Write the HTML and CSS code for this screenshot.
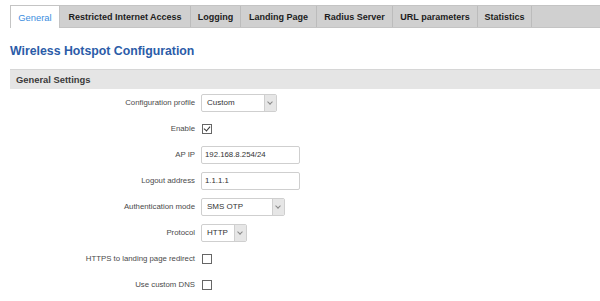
FILE: index.html
```html
<!DOCTYPE html>
<html lang="en">

<head>
  <meta charset="UTF-8">
  <meta name="viewport" content="width=device-width, initial-scale=1.0">
  <title>Wireless Hotspot</title>
  <link rel="stylesheet" href="styles.css">
</head>

<body>
  <div class="page">
    <ul class="tabs">
      <li class="tab active">General</li>
      <li class="tab">Restricted Internet Access</li>
      <li class="tab">Logging</li>
      <li class="tab">Landing Page</li>
      <li class="tab">Radius Server</li>
      <li class="tab">URL parameters</li>
      <li class="tab">Statistics</li>
    </ul>

    <h2 class="title">Wireless Hotspot Configuration</h2>

    <div class="section">
      <div class="section-head">General Settings</div>

      <div class="row">
        <label class="label">Configuration profile</label>
        <div class="field">
          <div class="select w76"><span class="select-text">Custom</span><span class="select-arrow"></span></div>
        </div>
      </div>

      <div class="row">
        <label class="label">Enable</label>
        <div class="field"><span class="check checked"></span></div>
      </div>

      <div class="row">
        <label class="label">AP IP</label>
        <div class="field"><div class="input">192.168.8.254/24</div></div>
      </div>

      <div class="row">
        <label class="label">Logout address</label>
        <div class="field"><div class="input">1.1.1.1</div></div>
      </div>

      <div class="row">
        <label class="label">Authentication mode</label>
        <div class="field">
          <div class="select w84"><span class="select-text">SMS OTP</span><span class="select-arrow"></span></div>
        </div>
      </div>

      <div class="row">
        <label class="label">Protocol</label>
        <div class="field">
          <div class="select w46"><span class="select-text">HTTP</span><span class="select-arrow"></span></div>
        </div>
      </div>

      <div class="row">
        <label class="label">HTTPS to landing page redirect</label>
        <div class="field"><span class="check"></span></div>
      </div>

      <div class="row">
        <label class="label">Use custom DNS</label>
        <div class="field"><span class="check"></span></div>
      </div>
    </div>
  </div>
</body>

</html>
```

FILE: styles.css
```css
body {
  margin: 0;
  padding: 0;
  background: #fff;
  font-family: 'Liberation Sans', Arial, sans-serif;
  color: #404040;
}

.page {
  padding: 5px 0 0 10px;
}

.tabs {
  display: flex;
  margin: 0;
  padding: 0;
  list-style: none;
  height: 21px;
  background: #d0d0d0;
  border-top: 1px solid #c4c4c4;
  border-bottom: 1px solid #c4c4c4;
}

.tab {
  display: flex;
  align-items: center;
  justify-content: center;
  white-space: nowrap;
  font-size: 9px;
  font-weight: bold;
  color: #1c1c1c;
  border-right: 1px solid #bcbcbc;
  box-sizing: border-box;
}

.tab:nth-child(1) { width: 50px; }
.tab:nth-child(2) { width: 131px; }
.tab:nth-child(3) { width: 50px; }
.tab:nth-child(4) { width: 76px; }
.tab:nth-child(5) { width: 76px; }
.tab:nth-child(6) { width: 85px; }
.tab:nth-child(7) { width: 54px; }

.tab.active {
  background: #fff;
  color: #3b8de0;
  font-weight: normal;
  font-size: 9.4px;
  border-left: 1px solid #c4c4c4;
  border-right: 1px solid #c4c4c4;
  margin-bottom: -1px;
  height: 22px;
}

.title {
  margin: 15px 0 0 0;
  height: 26px;
  font-size: 12.3px;
  line-height: 16px;
  font-weight: bold;
  color: #2b5ca8;
}

.section-head {
  height: 20px;
  line-height: 20px;
  padding-left: 6px;
  background: #e5e5e5;
  border-top: 1px solid #d6d6d6;
  box-sizing: border-box;
  font-size: 9.4px;
  font-weight: bold;
  color: #3a3a3a;
}

.row {
  display: flex;
  align-items: center;
  height: 26px;
  padding-top: 1px;
  box-sizing: border-box;
}

.label {
  width: 185px;
  text-align: right;
  font-size: 7.8px;
  color: #4a4a4a;
}

.field {
  margin-left: 6px;
  display: flex;
  align-items: center;
}

.input {
  width: 99px;
  height: 18px;
  box-sizing: border-box;
  border: 1px solid #cfcfcf;
  border-radius: 2px;
  padding: 0 3px;
  font-size: 7.8px;
  line-height: 16px;
  color: #333;
}

.select {
  display: flex;
  height: 18px;
  box-sizing: border-box;
  border: 1px solid #cfcfcf;
  border-radius: 2px;
  overflow: hidden;
}

.w76 { width: 76px; }
.w84 { width: 84px; }
.w46 { width: 46px; }

.select-text {
  flex: 1;
  padding-left: 5px;
  font-size: 8px;
  line-height: 16px;
  color: #333;
}

.select-arrow {
  width: 11px;
  background: #e6e6e6;
  border-left: 1px solid #cfcfcf;
  position: relative;
}

.select-arrow::after {
  content: "";
  position: absolute;
  left: 3px;
  top: 5px;
  width: 3px;
  height: 3px;
  border-right: 1px solid #888;
  border-bottom: 1px solid #888;
  transform: rotate(45deg);
}

.check {
  width: 10px;
  height: 10px;
  box-sizing: border-box;
  border: 1px solid #666;
  margin-left: 1px;
  position: relative;
}

.check.checked::after {
  content: "";
  position: absolute;
  left: 2px;
  top: 0px;
  width: 3px;
  height: 5px;
  border-right: 1px solid #333;
  border-bottom: 1px solid #333;
  transform: rotate(40deg);
}
```
